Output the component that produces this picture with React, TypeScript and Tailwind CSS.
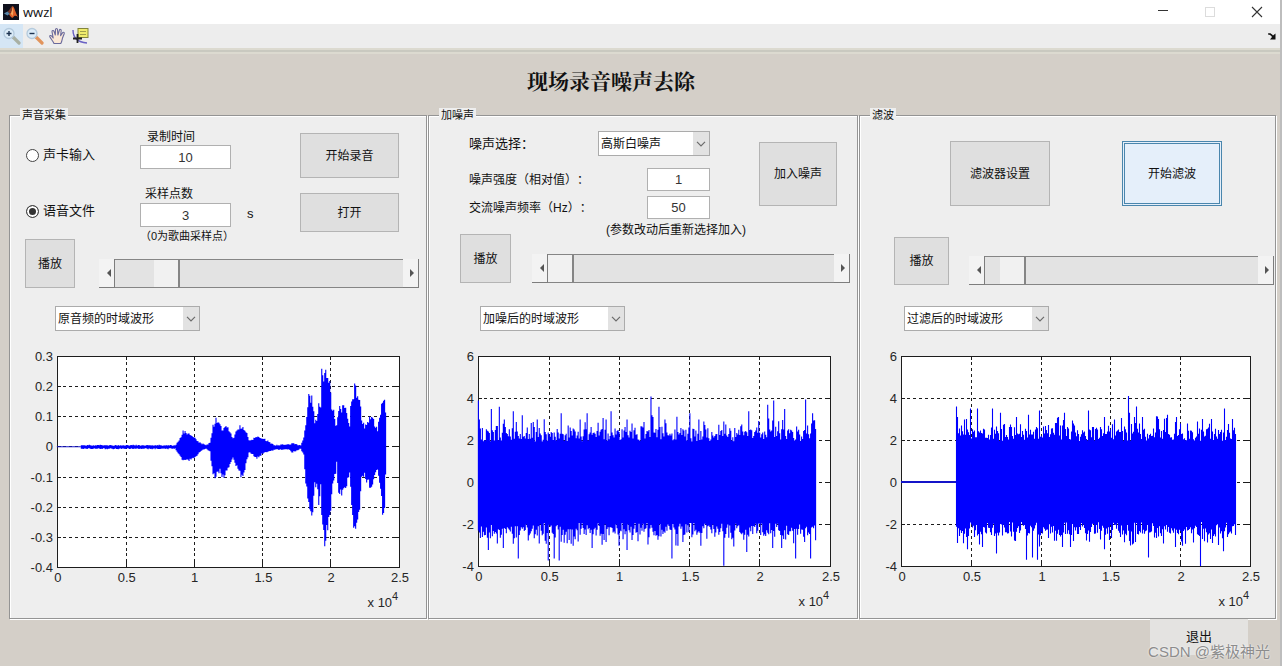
import { useState } from "react";
import type { ReactNode } from "react";

/* ---------- signal data ---------- */

type Bar = [x: number, up: number, down: number];

function createRandom(seed: number) {
  let s = seed;
  return () => {
    s = (s + 0x6d2b79f5) | 0;
    let t = Math.imul(s ^ (s >>> 15), 1 | s);
    t = (t + Math.imul(t ^ (t >>> 7), 61 | t)) ^ t;
    return ((t ^ (t >>> 14)) >>> 0) / 4294967296;
  };
}

const SPEECH_ENVELOPE: Bar[] = [
  [24, 1, 1], [118, 1, 1], [122, 6, 7], [126, 15, 14], [131, 14, 13], [136, 11, 12], [139, 7, 9],
  [144, 3, 3], [149, 1, 1], [153, 4, 4], [156, 21, 30], [159, 29, 29], [163, 23, 25], [165, 17, 30],
  [169, 23, 27], [173, 15, 17], [176, 8, 10], [179, 15, 18], [183, 21, 27], [186, 20, 30], [189, 16, 17],
  [192, 6, 5], [196, 7, 7], [200, 10, 11], [206, 8, 6], [211, 5, 4], [218, 1, 2], [233, 2, 2],
  [235, 3, 5], [244, 1, 1], [247, 8, 7], [249, 23, 40], [252, 51, 57], [254, 46, 67], [255, 51, 75],
  [258, 26, 40], [260, 26, 37], [262, 46, 54], [264, 43, 40], [265, 76, 74], [268, 75, 95],
  [271, 71, 90], [273, 63, 74], [275, 43, 50], [277, 40, 32], [279, 20, 27], [280, 23, 14],
  [282, 41, 54], [284, 38, 47], [288, 41, 45], [290, 33, 37], [293, 23, 30], [294, 43, 47],
  [297, 53, 77], [298, 60, 90], [301, 53, 79], [303, 50, 60], [305, 26, 30], [308, 21, 27],
  [311, 25, 37], [315, 31, 39], [318, 23, 27], [321, 18, 24], [323, 30, 34], [326, 50, 64],
  [328, 45, 60], [329, 33, 27],
];

function speechBars(): Bar[] {
  const rnd = createRandom(11);
  const bars: Bar[] = [];
  let k = 0;
  for (let x = 24; x <= 329; x++) {
    while (k < SPEECH_ENVELOPE.length - 2 && SPEECH_ENVELOPE[k + 1][0] < x) k++;
    const a = SPEECH_ENVELOPE[k];
    const b = SPEECH_ENVELOPE[k + 1];
    const t = Math.min(1, Math.max(0, (x - a[0]) / (b[0] - a[0])));
    const up = a[1] + (b[1] - a[1]) * t;
    const down = a[2] + (b[2] - a[2]) * t;
    bars.push([x, up * (0.84 + rnd() * 0.22) + rnd(), down * (0.84 + rnd() * 0.22) + 0.5 + rnd()]);
  }
  return bars;
}

function noiseBars(from: number, to: number, seed: number, unit: number, tops: number[][], lows: number[][]): Bar[] {
  const rnd = createRandom(seed);
  const level = (base: number) => {
    const r = rnd();
    return (base + rnd() * 0.6 + (r > 0.6 ? (r - 0.6) * 1.6 : 0)) * unit;
  };
  const bars: Bar[] = [];
  for (let x = from; x <= to; x++) bars.push([x, level(1.95), level(1.9)]);
  tops.forEach(([x, v]) => {
    const bar = bars[x - from];
    if (bar) bar[1] = v * unit;
  });
  lows.forEach(([x, v]) => {
    const bar = bars[x - from];
    if (bar) bar[2] = v * unit;
  });
  return bars;
}

const SPEECH = speechBars();

const NOISY = noiseBars(0, 338, 5, 21.1,
  [[0, 3.9], [1, 3], [13, 3.5], [21, 3.6], [26, 3], [35, 3.4], [44, 3.2], [59, 3], [83, 3.3], [102, 3], [109, 3.3], [128, 3], [133, 3.4], [149, 3],
    [173, 4.1], [174, 3.2], [181, 3.6], [187, 3], [212, 3.3], [221, 3], [246, 2.9], [271, 3.4], [290, 3.7], [296, 3.9], [307, 3.5], [328, 3.95], [335, 3.3]],
  [[10, 3.2], [25, 3.1], [35, 2.9], [40, 3.6], [70, 3.7], [76, 3.6], [81, 3.7], [95, 3], [114, 3.1], [141, 3], [149, 3.2], [194, 3.6], [200, 3], [223, 3],
    [246, 3.95], [269, 3.3], [295, 3.1], [304, 3.1], [318, 3.6], [333, 3.6]]);

const FILTERED = noiseBars(55, 334, 23, 21,
  [[55, 3.6], [56, 3.1], [69, 3.5], [76, 3.5], [91, 3.5], [99, 3.3], [115, 3.1], [127, 3.2], [138, 3.4], [157, 3.1], [163, 3.3], [187, 3.4], [203, 3.1],
    [227, 4.1], [228, 3.3], [235, 3.6], [241, 3.1], [257, 3], [266, 3.2], [275, 3.1], [310, 3], [323, 3.5], [331, 3]],
  [[56, 2.9], [66, 3.2], [81, 3.1], [95, 3.4], [125, 3.7], [131, 3.6], [136, 3.7], [161, 3.1], [169, 3.1], [203, 3.2], [247, 3.6], [274, 3.1], [299, 4], [322, 3.3]]);

/* ---------- chart ---------- */

interface ChartProps {
  label: string;
  viewWidth: number;
  left: number;
  width: number;
  height: number;
  yLabels: string[];
  zero: number;
  bars: Bar[];
  quietUntil: number;
  quietStroke: number;
}

const X_LABELS = ["0", "0.5", "1", "1.5", "2", "2.5"];

function Chart({ label, viewWidth, left, width, height, yLabels, zero, bars, quietUntil, quietStroke }: ChartProps) {
  const top = 11;
  const xs = X_LABELS.map((_, i) => Math.round((width * i) / 5));
  const ys = yLabels.map((_, i) => Math.floor((height * i) / (yLabels.length - 1)));
  const wave = bars.map(([x, up, down]) => `M${x + 0.5} ${(zero - up).toFixed(1)}V${(zero + down).toFixed(1)}`).join("");
  return (
    <svg role="img" aria-label={label} viewBox={`0 0 ${viewWidth} 267`} className="block w-full">
      <g transform={`translate(${left} ${top})`}>
        <rect width={width} height={height} fill="#fff" />
        <g stroke="#1c1c1c" strokeDasharray="3 3" shapeRendering="crispEdges">
          {xs.slice(1, -1).map((x) => <line key={x} x1={x + 0.5} x2={x + 0.5} y1="0" y2={height} />)}
          {ys.slice(1, -1).map((y) => <line key={y} x1="0" x2={width} y1={y + 0.5} y2={y + 0.5} />)}
        </g>
        <g stroke="#1c1c1c" shapeRendering="crispEdges">
          {xs.slice(1, -1).map((x) => <path key={x} d={`M${x + 0.5} 0v4M${x + 0.5} ${height}v-5`} />)}
          {ys.slice(1, -1).map((y) => <path key={y} d={`M0 ${y + 0.5}h4M${width} ${y + 0.5}h-5`} />)}
          <rect x="0.5" y="0.5" width={width} height={height} fill="none" />
        </g>
        <path d={`M0 ${zero}H${quietUntil}`} stroke="#1414c8" strokeWidth={quietStroke} />
        <path d={wave} stroke="#0000ff" strokeWidth="1.1" fill="none" />
      </g>
      <g fontFamily="'Liberation Sans', Arial, sans-serif" fontSize="13" fill="#262626">
        {ys.map((y, i) => (
          <text key={y} x={left - 4} y={top + y + 5} textAnchor="end">{yLabels[i]}</text>
        ))}
        {xs.map((x, i) => (
          <text key={x} x={left + x + 1} y={top + height + 15} textAnchor="middle">{X_LABELS[i]}</text>
        ))}
        <text x={left + width - 7} y={top + height + 40} textAnchor="end">x 10</text>
        <text x={left + width - 7} y={top + height + 33} fontSize="11">4</text>
      </g>
    </svg>
  );
}

/* ---------- controls ---------- */

function Panel({ title, children }: { title: string; children: ReactNode }) {
  return (
    <fieldset className="min-w-0 border border-[#949494] bg-[#eeeeee] pb-[6px] shadow-[inset_1px_1px_0_#fff,1px_1px_0_#fff]">
      <legend className="ml-[10px] bg-[#eeeeee] px-[2px] text-[11px] leading-[14px]">{title}</legend>
      {children}
    </fieldset>
  );
}

function PushButton({ children, className }: { children: ReactNode; className: string }) {
  return (
    <button type="button" className={`border border-[#b4b4b4] bg-[#dfdfdf] text-[12px] leading-4 ${className}`}>
      {children}
    </button>
  );
}

function NumberBox({ id, initial, className }: { id: string; initial: string; className: string }) {
  const [value, setValue] = useState(initial);
  return (
    <input
      id={id}
      value={value}
      onChange={(e) => setValue(e.target.value)}
      className={`border border-[#b0b0b0] bg-white text-center text-[13px] leading-4 text-[#333] outline-none ${className}`}
    />
  );
}

function DropDown({ id, label, options, className }: { id: string; label: string; options: string[]; className: string }) {
  return (
    <div className={`relative h-[25px] ${className}`}>
      <select
        id={id}
        aria-label={label}
        className="block h-full w-full appearance-none border border-[#ababab] bg-white pr-4 pl-[2px] text-[12px] outline-none"
      >
        {options.map((o) => <option key={o}>{o}</option>)}
      </select>
      <span className="pointer-events-none absolute inset-y-px right-px flex w-4 items-center justify-center bg-[#e2e2e2]">
        <svg viewBox="0 0 10 6" className="h-[6px] w-[10px]" fill="none" stroke="#6b6b6b" strokeWidth="1.2">
          <path d="M1 .8 5 4.8 9 .8" />
        </svg>
      </span>
    </div>
  );
}

function ScrollSlider({ label, initial }: { label: string; initial: number }) {
  const [value, setValue] = useState(initial);
  const arrow = "flex w-4 shrink-0 items-center justify-end border-r border-b border-[#7d7d7d] bg-[#f3f3f3] pr-[3px]";
  return (
    <div className="flex h-[29px]">
      <button type="button" aria-label={`${label} -`} className={arrow} onClick={() => setValue(Math.max(0, value - 1))}>
        <svg viewBox="0 0 4 8" className="h-2 w-1"><path d="M4 0v8L0 4z" fill="#555" /></svg>
      </button>
      <input
        type="range"
        aria-label={label}
        value={value}
        onChange={(e) => setValue(Number(e.target.value))}
        className="h-full min-w-0 flex-1 appearance-none border-y border-[#858585] bg-[#e3e3e3] outline-none [&::-webkit-slider-thumb]:h-[27px] [&::-webkit-slider-thumb]:w-[26px] [&::-webkit-slider-thumb]:appearance-none [&::-webkit-slider-thumb]:border-r-2 [&::-webkit-slider-thumb]:border-[#858585] [&::-webkit-slider-thumb]:bg-[#f1f1f1]"
      />
      <button type="button" aria-label={`${label} +`} className={arrow} onClick={() => setValue(Math.min(100, value + 1))}>
        <svg viewBox="0 0 4 8" className="mr-px h-2 w-1"><path d="M0 0v8l4-4z" fill="#555" /></svg>
      </button>
    </div>
  );
}

function SourceRadio({ id, label, checked, onSelect }: { id: string; label: string; checked: boolean; onSelect: () => void }) {
  return (
    <label htmlFor={id} className="flex h-5 items-center gap-1 text-[13px] whitespace-nowrap">
      <input
        id={id}
        type="radio"
        name="source"
        checked={checked}
        onChange={onSelect}
        className="size-[13px] appearance-none rounded-full border border-[#444] bg-white checked:bg-[#333] checked:shadow-[inset_0_0_0_2px_#fff]"
      />
      {label}
    </label>
  );
}

/* ---------- panels ---------- */

function CapturePanel() {
  const [source, setSource] = useState("file");
  return (
    <Panel title="声音采集">
      <div className="grid grid-cols-[16fr_114fr_91fr_69fr_99fr_27fr]">
        <div className="col-start-2 flex flex-col gap-9 pt-[23px]">
          <SourceRadio id="src-card" label="声卡输入" checked={source === "card"} onSelect={() => setSource("card")} />
          <SourceRadio id="src-file" label="语音文件" checked={source === "file"} onSelect={() => setSource("file")} />
        </div>
        <div className="flex min-w-0 flex-col pt-[7px] text-[12px] leading-4">
          <label htmlFor="duration" className="pl-[7px]">录制时间</label>
          <NumberBox id="duration" initial="10" className="h-6 w-full" />
          <label htmlFor="samples" className="mt-[17px] pl-[5px]">采样点数</label>
          <NumberBox id="samples" initial="3" className="mt-px h-6 w-full" />
          <p className="mt-px text-[11px] leading-4 whitespace-nowrap">（0为歌曲采样点）</p>
        </div>
        <p className="pt-[84px] pl-4 text-[13px] leading-4">s</p>
        <div className="flex flex-col gap-[15px] pt-[11px]">
          <PushButton className="h-[45px]">开始录音</PushButton>
          <PushButton className="h-[39px]">打开</PushButton>
        </div>
      </div>
      <div className="-mt-[5px] grid grid-cols-[15fr_50fr_24fr_320fr_7fr] items-end">
        <PushButton className="col-start-2 h-[49px]">播放</PushButton>
        <div className="col-start-4"><ScrollSlider label="原音频播放位置" initial={15} /></div>
      </div>
      <div className="mt-[18px] mb-[14px] grid grid-cols-[45fr_145fr_226fr]">
        <DropDown id="view-source" label="原音频波形" options={["原音频的时域波形", "原音频的频谱"]} className="col-start-2" />
      </div>
      <Chart
        label="原音频的时域波形"
        viewWidth={417}
        left={47}
        width={343}
        height={212}
        yLabels={["0.3", "0.2", "0.1", "0", "-0.1", "-0.2", "-0.3", "-0.4"]}
        zero={91}
        bars={SPEECH}
        quietUntil={24}
        quietStroke={1}
      />
    </Panel>
  );
}

function NoisePanel() {
  return (
    <Panel title="加噪声">
      <div className="grid grid-cols-[40fr_241fr_49fr_78fr_20fr] pt-[9px]">
        <div className="col-start-2 text-[12px] [text-spacing-trim:space-all]">
          <div className="flex items-center justify-between">
            <label htmlFor="noise-type" className="text-[13px]">噪声选择：</label>
            <DropDown id="noise-type" label="噪声选择" options={["高斯白噪声", "交流噪声"]} className="w-28" />
          </div>
          <div className="mt-3 flex items-center justify-between">
            <label htmlFor="noise-level">噪声强度（相对值）：</label>
            <NumberBox id="noise-level" initial="1" className="h-[23px] w-[63px]" />
          </div>
          <div className="mt-[5px] flex items-center justify-between">
            <label htmlFor="noise-freq">交流噪声频率（Hz）：</label>
            <NumberBox id="noise-freq" initial="50" className="h-[23px] w-[63px]" />
          </div>
        </div>
        <PushButton className="col-start-4 mt-[11px] h-16">加入噪声</PushButton>
      </div>
      <div className="mt-[3px] grid grid-cols-[177fr_251fr]">
        <p className="col-start-2 text-[12px] leading-4 whitespace-nowrap">(参数改动后重新选择加入)</p>
      </div>
      <div className="-mt-1 grid grid-cols-[31fr_51fr_21fr_318fr_7fr] items-end">
        <PushButton className="col-start-2 h-[49px]">播放</PushButton>
        <div className="col-start-4"><ScrollSlider label="加噪音频播放位置" initial={0} /></div>
      </div>
      <div className="mt-[23px] mb-[14px] grid grid-cols-[51fr_145fr_232fr]">
        <DropDown id="view-noisy" label="加噪后波形" options={["加噪后的时域波形", "加噪后的频谱"]} className="col-start-2" />
      </div>
      <Chart
        label="加噪后的时域波形"
        viewWidth={429}
        left={49}
        width={353}
        height={211}
        yLabels={["6", "4", "2", "0", "-2", "-4"]}
        zero={127}
        bars={NOISY}
        quietUntil={0}
        quietStroke={1}
      />
    </Panel>
  );
}

function FilterPanel() {
  return (
    <Panel title="滤波">
      <div className="grid grid-cols-[90fr_100fr_72fr_100fr_53fr] pt-[19px]">
        <PushButton className="col-start-2 h-[65px]">滤波器设置</PushButton>
        <button
          type="button"
          className="col-start-4 h-[65px] border-3 border-double border-[#4a86ad] bg-[#e5effa] text-[12px] leading-4"
        >
          开始滤波
        </button>
      </div>
      <div className="mt-[31px] grid grid-cols-[34fr_55fr_20fr_305fr_1fr] items-end">
        <PushButton className="col-start-2 h-[48px]">播放</PushButton>
        <div className="col-start-4"><ScrollSlider label="滤波音频播放位置" initial={6} /></div>
      </div>
      <div className="mt-[21px] mb-[14px] grid grid-cols-[44fr_145fr_226fr]">
        <DropDown id="view-filtered" label="过滤后波形" options={["过滤后的时域波形", "过滤后的频谱"]} className="col-start-2" />
      </div>
      <Chart
        label="过滤后的时域波形"
        viewWidth={415}
        left={41}
        width={349}
        height={210}
        yLabels={["6", "4", "2", "0", "-2", "-4"]}
        zero={126}
        bars={FILTERED}
        quietUntil={55}
        quietStroke={2}
      />
    </Panel>
  );
}

/* ---------- window chrome ---------- */

function AppLogo() {
  return (
    <svg viewBox="0 0 16 16" className="size-4">
      <rect width="16" height="16" fill="#10101c" />
      <path d="M1 9.5 4.5 7.5 7 9.5 4.5 11.5z" fill="#5b86a8" />
      <path d="M4.5 7.5C6.5 7 7.5 3 9.5 2c-.5 4-1.500 6-2.500 7.500z" fill="#7d3a2a" />
      <path d="M9.500 2C11.500 3 12.500 9 15 13c-2-1.500-3.500-2-5 .5C9 14.500 8 13 6 10.500 8.500 9 9 5 9.500 2z" fill="#e0602a" />
      <path d="M9.600 3c.8 2 .9 6 .1 9-.8-.8-1.200-1.400-1.900-2.200C9 8 9.300 5 9.600 3z" fill="#f7a860" />
    </svg>
  );
}

function Magnifier({ plus }: { plus: boolean }) {
  return (
    <svg viewBox="0 0 20 18" className="h-[18px] w-5">
      <path d="m11 10 6 6" stroke={plus ? "#a9b0a4" : "#e2945c"} strokeWidth="3.200" strokeLinecap="round" />
      <circle cx="7" cy="6.500" r="5" fill="#dcecf8" stroke="#b4cadd" strokeWidth="1.300" />
      <path d={plus ? "M4.500 6.500h5M7 4v5" : "M4.500 6.500h5"} stroke="#1d3350" strokeWidth="1.400" />
    </svg>
  );
}

function PanHand() {
  return (
    <svg viewBox="0 0 20 18" className="h-[18px] w-5">
      <path
        d="M6 16.500C5 14 3 12 1.800 9.800c-.4-1.200.8-1.700 1.700-.9L5.200 11 4 4.600c-.1-1.300 1.500-1.600 2-.3L7.300 8 7.500 2.600c.1-1.400 1.900-1.400 2 0L9.900 8l1.500-4.900c.4-1.200 2-.8 1.800.5L12.600 8.600l2-2.900c.8-1 2.100-.1 1.600 1L14.500 11c-.4 2-.7 4-1.700 5.500z"
        fill="#fbe8d6"
        stroke="#6a6a9c"
        strokeWidth="1.100"
        strokeLinejoin="round"
      />
    </svg>
  );
}

function DataCursor() {
  return (
    <svg viewBox="0 0 20 18" className="h-[18px] w-5">
      <path d="M2 3c0 5 2 12 14 13" fill="none" stroke="#6a62c4" strokeWidth="1.400" />
      <rect x="7" y="1.500" width="10" height="9" fill="#f0ec6c" stroke="#83853c" />
      <path d="M9 4.500h6M9 7.500h6" stroke="#a0a04a" />
      <path d="M6.500 7v9M2 11.500h9" stroke="#222" strokeWidth="1.800" />
    </svg>
  );
}

const TOOL = "flex h-6 w-[23px] items-center justify-center";

export default function App() {
  return (
    <div className="relative flex min-h-screen flex-col overflow-hidden border-r-2 border-[#bdbdbd] bg-[#d4cfc8] font-['Liberation_Sans','Noto_Sans_CJK_SC',sans-serif] text-[#111]">
      <header className="flex h-6 items-center bg-white pl-[3px]">
        <AppLogo />
        <span className="ml-1 flex-1 font-['Open_Sans','Noto_Sans',sans-serif] text-[13px] leading-5">wwzl</span>
        <button type="button" aria-label="最小化" className="flex h-6 w-[47px] items-center justify-center">
          <svg viewBox="0 0 12 12" className="size-3"><path d="M1 4.500h10" stroke="#333" /></svg>
        </button>
        <button type="button" aria-label="最大化" disabled className="flex h-6 w-[47px] items-center justify-center">
          <svg viewBox="0 0 12 12" className="size-3"><rect x="1.500" y="1.500" width="9" height="9" fill="none" stroke="#dcdcdc" /></svg>
        </button>
        <button type="button" aria-label="关闭" className="flex h-6 w-[47px] items-center justify-center">
          <svg viewBox="0 0 12 12" className="size-3"><path d="m1 1 10 10M11 1 1 11" stroke="#333" strokeWidth="1.100" /></svg>
        </button>
      </header>
      <nav className="flex h-6 items-center bg-[#ededed]">
        <button type="button" aria-label="放大" className={`${TOOL} bg-[#d5e6f5]`}><Magnifier plus /></button>
        <button type="button" aria-label="缩小" className={TOOL}><Magnifier plus={false} /></button>
        <button type="button" aria-label="平移" className={TOOL}><PanHand /></button>
        <button type="button" aria-label="数据游标" className={TOOL}><DataCursor /></button>
        <button type="button" aria-label="停靠" className="mr-1 ml-auto">
          <svg viewBox="0 0 8 8" className="size-2"><path d="M0 1.500c3-.5 4 .5 5 2L7.500 1.500V7.500H2L4 5C3 3.500 2 2.500 0 2.500z" fill="#111" /></svg>
        </button>
      </nav>
      <div className="h-[6px] border-y-2 border-[#dcdad0] bg-[#c9c9c0]" />
      <h1 className="mt-[14px] mb-3 pr-[58px] text-center font-['Liberation_Serif','Noto_Serif_CJK_SC','Noto_Sans_CJK_SC',serif] text-[21px] leading-7 font-bold">
        现场录音噪声去除
      </h1>
      <main className="grid grid-cols-[418fr_430fr_417fr] gap-px pr-1 pl-[9px]">
        <CapturePanel />
        <NoisePanel />
        <FilterPanel />
      </main>
      <footer className="flex justify-end pr-8">
        <button type="button" className="h-9 w-[98px] bg-[#e4e3e1] text-[13px] leading-4">退出</button>
      </footer>
      <p className="pointer-events-none absolute right-[10px] bottom-1 text-[15px] leading-5 text-[#8c8c8c] [text-shadow:0_0_2px_#fff]">
        CSDN @紫极神光
      </p>
    </div>
  );
}
